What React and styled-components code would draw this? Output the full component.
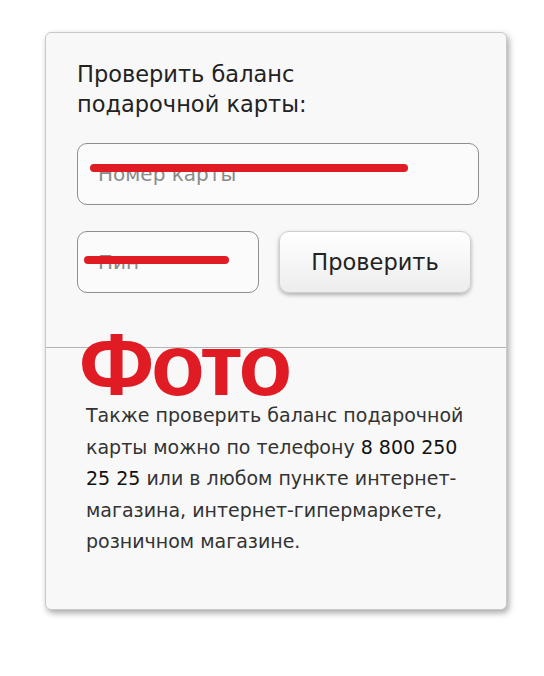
import React from 'react';
import styled, { createGlobalStyle } from 'styled-components';

const GlobalStyle = createGlobalStyle`
  body {
    margin: 0;
    background: #ffffff;
    font-family: "DejaVu Sans", "Liberation Sans", sans-serif;
  }
`;

const Page = styled.div`
  width: 544px;
  height: 676px;
  padding: 32px 0 0 45px;
  box-sizing: border-box;
`;

const Card = styled.div`
  position: relative;
  width: 462px;
  height: 578px;
  box-sizing: border-box;
  background: #f8f8f8;
  border: 1px solid #c9c9c9;
  border-radius: 6px;
  box-shadow: 2px 3px 6px rgba(0, 0, 0, 0.35);
`;

const Top = styled.div`
  padding: 26px 27px 0 31px;
  height: 315px;
  box-sizing: border-box;
  border-bottom: 1px solid #b5b5b5;
`;

const Title = styled.h2`
  margin: 0 0 24px;
  font-size: 22.5px;
  line-height: 30px;
  font-weight: normal;
  color: #222;
`;

const Row = styled.div`
  display: flex;
  gap: 20px;
  margin-bottom: 26px;
`;

const Field = styled.div`
  position: relative;
  width: ${p => p.$w}px;
  height: 62px;
`;

const Input = styled.input`
  width: 100%;
  height: 100%;
  box-sizing: border-box;
  border: 1px solid #8f8f8f;
  border-radius: 10px;
  background: #fbfbfb;
  padding: 0 20px;
  font-family: inherit;
  font-size: 20px;
  color: #333;
  &::placeholder {
    color: #8a8a8a;
  }
`;

// red marker lines drawn over the placeholders
const Strike = styled.span`
  position: absolute;
  left: ${p => p.$l}px;
  top: ${p => p.$t}px;
  width: ${p => p.$w}px;
  height: 8px;
  border-radius: 4px;
  background: #e01b24;
`;

const Button = styled.button`
  width: 192px;
  height: 62px;
  border: 1px solid #cfcfcf;
  border-radius: 10px;
  background: linear-gradient(#ffffff, #ededed);
  box-shadow: 0 2px 4px rgba(0, 0, 0, 0.3);
  font-family: inherit;
  font-size: 22.5px;
  color: #222;
`;

const Bottom = styled.div`
  padding: 52px 30px 0 40px;
`;

const Text = styled.p`
  margin: 0;
  font-size: 19px;
  line-height: 31.5px;
  color: #333;
`;

const Phone = styled.span`
  color: #111;
`;

const Watermark = styled.div`
  position: absolute;
  left: 33px;
  top: 288px;
  font-family: "Liberation Sans", Arial, sans-serif;
  font-size: 88px;
  font-weight: bold;
  letter-spacing: -3px;
  line-height: 1;
  color: #e01b24;
`;

export default function App() {
  return (
    <>
      <GlobalStyle />
      <Page>
        <Card>
          <Top>
            <Title>Проверить баланс<br />подарочной карты:</Title>
            <Row>
              <Field $w={402}>
                <Input placeholder="Номер карты" />
                <Strike $l={13} $t={21} $w={318} />
              </Field>
            </Row>
            <Row>
              <Field $w={182}>
                <Input placeholder="Пин" />
                <Strike $l={7} $t={25} $w={145} />
              </Field>
              <Button>Проверить</Button>
            </Row>
          </Top>
          <Bottom>
            <Text>
              Также проверить баланс подарочной карты можно по телефону <Phone>8 800 250 25 25</Phone> или в любом пункте интернет-магазина, интернет-гипермаркете, розничном магазине.
            </Text>
          </Bottom>
          <Watermark>Фото</Watermark>
        </Card>
      </Page>
    </>
  );
}
